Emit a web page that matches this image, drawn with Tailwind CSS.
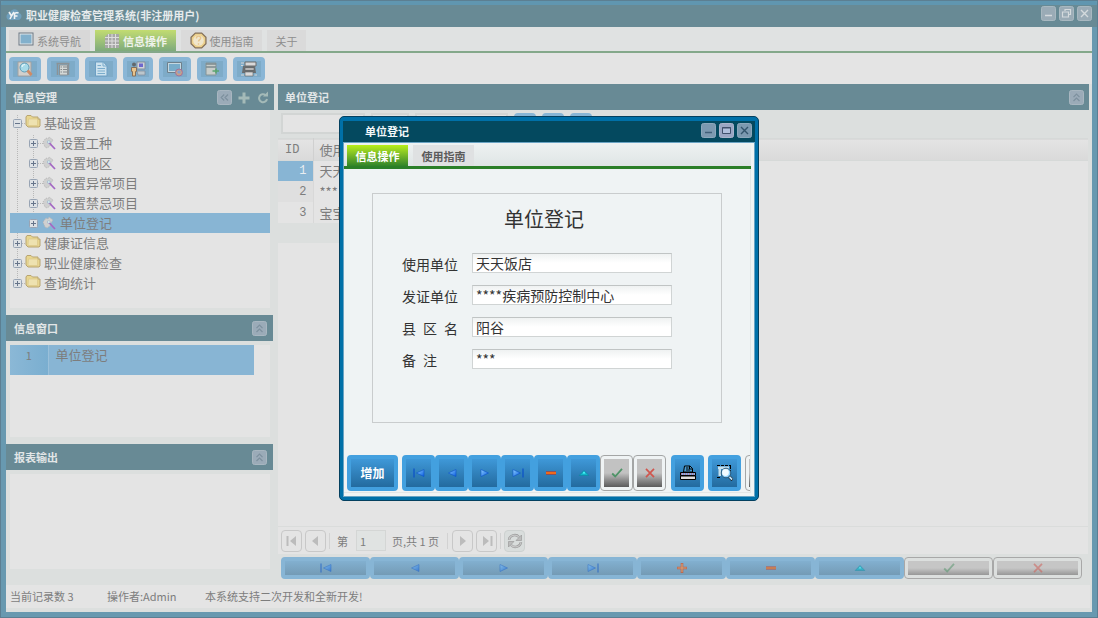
<!DOCTYPE html>
<html lang="zh-CN">
<head>
<meta charset="utf-8">
<title>职业健康检查管理系统</title>
<script src="https://cdn.jsdelivr.net/npm/@tailwindcss/browser@4"></script>
</head>
<body class="h-screen overflow-hidden font-['Noto_Sans_CJK_SC',sans-serif] text-[11px] leading-4 text-[#7d7d7d] bg-[#6899b0]">

<svg width="0" height="0" class="absolute" aria-hidden="true">
  <defs>
    <linearGradient id="blue" x1="0" y1="0" x2="1" y2="1"><stop offset="0" stop-color="#8cd0ff"/><stop offset="1" stop-color="#0a5ce0"/></linearGradient>
    <symbol id="first" viewBox="0 0 12 10"><path d="M1 .5v9" stroke="#0a50c8" stroke-width="1.2"/><path d="M11 1.5v7L3.500 5z" fill="url(#blue)" stroke="#0a50c8" stroke-width=".6"/></symbol>
    <symbol id="prev" viewBox="0 0 12 10"><path d="M10 1.500v7L2.500 5z" fill="url(#blue)" stroke="#0a50c8" stroke-width=".6"/></symbol>
    <symbol id="next" viewBox="0 0 12 10"><path d="M2 1.500v7L9.500 5z" fill="url(#blue)" stroke="#0a50c8" stroke-width=".6"/></symbol>
    <symbol id="last" viewBox="0 0 12 10"><path d="M11 .5v9" stroke="#0a50c8" stroke-width="1.2"/><path d="M1 1.500v7L8.500 5z" fill="url(#blue)" stroke="#0a50c8" stroke-width=".6"/></symbol>
    <symbol id="plus" viewBox="0 0 12 10"><path d="M6 0v10M1 5h10" stroke="#e04010" stroke-width="2.600"/><path d="M6 .8v8.400M1.500 5h9" stroke="#ffa050" stroke-width="1.2"/></symbol>
    <symbol id="minus" viewBox="0 0 12 10"><path d="M1 5h10" stroke="#dd2200" stroke-width="3"/><path d="M1 5h10" stroke="#ff9a2c" stroke-width="1.200"/></symbol>
    <symbol id="up" viewBox="0 0 12 10"><path d="M6 2.500L10.800 7.500H1.200z" fill="#12b4c8" stroke="#068098" stroke-width=".5"/><path d="M6 3.500l1.500 2h-3z" fill="#5ff"/></symbol>
    <symbol id="ok" viewBox="0 0 12 10"><path d="M1.200 5.500l3 3L11 .8" fill="none" stroke="#4f9468" stroke-width="1.800"/></symbol>
    <symbol id="no" viewBox="0 0 12 10"><path d="M2 .8l8 8.400M10 .8L2 9.200" stroke="#d0564e" stroke-width="1.700"/></symbol>
    <symbol id="folder" viewBox="0 0 16 14"><path d="M1 11V3l1-1.500h4L7.500 3H13v2h2v7l-1 1H3z" fill="#e8d690" stroke="#b8a470"/><path d="M3.500 5h9v6.500H3z" fill="#eee2b0" stroke="#d8c484" stroke-width=".6"/></symbol>
    <symbol id="wand" viewBox="0 0 14 14"><path d="M1 6l3-4 2 1 1-2 4 3-2 3-1 3-3 2-2-1z" fill="#d0d0d0" stroke="#b4b4b4" stroke-dasharray="1.500 1" stroke-width=".8"/><path d="M6.500 6L13 13" stroke="#a468c4" stroke-width="1.800"/><path d="M5.500 5h2.500v2H5.500z" fill="#eef6fa" stroke="#8fb6c8" stroke-width=".6"/></symbol>
    <symbol id="exp" viewBox="0 0 9 9"><rect x=".5" y=".5" width="8" height="8" rx="1" fill="#dde1e5" stroke="#98a4b4"/><path d="M2 4.500h5M4.500 2v5" stroke="#66748a"/></symbol>
    <symbol id="col" viewBox="0 0 9 9"><rect x=".5" y=".5" width="8" height="8" rx="1" fill="#dde1e5" stroke="#98a4b4"/><path d="M2 4.500h5" stroke="#66748a"/></symbol>
    <symbol id="chev" viewBox="0 0 15 15"><rect x=".5" y=".5" width="14" height="14" rx="2" fill="#9babb8" stroke="#a8b6c0"/><path d="M4.500 7.200l3-3 3 3M4.500 11l3-3 3 3" fill="none" stroke="#7d909e" stroke-width="1.200"/></symbol>
    <symbol id="wmin" viewBox="0 0 15 15"><rect x=".5" y=".5" width="14" height="14" rx="2" fill="#7c99b0" stroke="#8ca8bc"/><path d="M4 9.500h7" stroke="#405f78" stroke-width="1.500"/></symbol>
    <symbol id="wmax" viewBox="0 0 15 15"><rect x=".5" y=".5" width="14" height="14" rx="2" fill="#9aa6c4" stroke="#aab4cc"/><path d="M3.500 4.500h8v6h-8z" fill="#b0bfdc" stroke="#40506c"/><path d="M3 5h9" stroke="#40506c"/></symbol>
    <symbol id="wclose" viewBox="0 0 15 15"><rect x=".5" y=".5" width="14" height="14" rx="2" fill="#7c99b0" stroke="#8ca8bc"/><path d="M4 4l7 7M11 4l-7 7" stroke="#34546c" stroke-width="1.400"/></symbol>
    <symbol id="mmin" viewBox="0 0 15 15"><rect x=".5" y=".5" width="14" height="14" rx="2" fill="#9aabb6" stroke="#a8b8c0"/><path d="M4 9.500h7" stroke="#d4dadd" stroke-width="1.500"/></symbol>
    <symbol id="mrest" viewBox="0 0 15 15"><rect x=".5" y=".5" width="14" height="14" rx="2" fill="#9aabb6" stroke="#a8b8c0"/><path d="M6 5V3.500h5.500v5H10M3.500 6h6v5h-6z" fill="none" stroke="#d4dadd" stroke-width="1.200"/></symbol>
    <symbol id="mclose" viewBox="0 0 15 15"><rect x=".5" y=".5" width="14" height="14" rx="2" fill="#9aabb6" stroke="#a8b8c0"/><path d="M4 4l7 7M11 4l-7 7" stroke="#d4dadd" stroke-width="1.400"/></symbol>
  </defs>
</svg>

<div class="flex h-full flex-col border border-[#5c7f92]">
  <header class="flex h-[26px] shrink-0 items-center gap-1 rounded-t border-t-4 border-[#6096b0] bg-[#688a95] px-[5px] pb-0.5">
    <svg class="h-3.5 w-4" viewBox="0 0 16 14" aria-hidden="true"><path d="M3 12C-1 11 0 5 4 5c1-5 8-5 9 0 4 1 3 7-1 7z" fill="#6f9fbc"/><path d="M3 4l2.500 4L8 4M5.500 8l-1.500 3M8.500 11V6.500c0-2 3-2 4-1.500M8 8h3.500" fill="none" stroke="#eef2f4" stroke-width="1.600"/></svg>
    <h1 class="flex-1 font-bold text-[#e6ebec]">职业健康检查管理系统(非注册用户)</h1>
    <div class="flex gap-[3px] pb-1">
      <button aria-label="最小化"><svg class="size-[15px]"><use href="#mmin"/></svg></button>
      <button aria-label="还原"><svg class="size-[15px]"><use href="#mrest"/></svg></button>
      <button aria-label="关闭"><svg class="size-[15px]"><use href="#mclose"/></svg></button>
    </div>
  </header>

  <div class="mx-[5px] mb-[5px] flex min-h-0 flex-1 flex-col bg-[#dcdfde]">
    <nav class="flex h-[26px] shrink-0 items-end gap-[5px] border-b-2 border-[#84a88a] bg-[#e0e2e2] pl-[3px] text-[#8e8e8e]">
      <button class="flex h-[21px] w-[81px] items-center justify-center gap-[3px] bg-[#d8d8d8]">
        <svg class="mb-1 h-3.5 w-4" viewBox="0 0 16 14" aria-hidden="true"><rect x="1" y="1" width="14" height="12" fill="#e4e8ea" stroke="#6c7884"/><rect x="2.500" y="2.500" width="11" height="9" fill="#82b0cc"/></svg>系统导航</button>
      <button class="flex h-[21px] w-[81px] items-center justify-center gap-[3px] bg-linear-to-b from-[#c2dc70] to-[#7eaa7c] font-bold text-[#eef2ea]">
        <svg class="size-4" viewBox="0 0 16 16" aria-hidden="true"><path d="M4 1h11v14H1V4z" fill="#a8a8a8"/><path d="M1 4.500h14M1 8h14M1 11.500h14M4.500 1v14M8 1v14M11.500 1v14" stroke="#dedede"/></svg>信息操作</button>
      <button class="flex h-[21px] w-[81px] items-center justify-center gap-[3px] bg-[#dadada]">
        <svg class="size-[17px]" viewBox="0 0 16 16" aria-hidden="true"><path d="M5 1h6l4 4v6l-4 4H5l-4-4V5z" fill="#ecd08c" stroke="#84705a" stroke-width="1.200"/><circle cx="8" cy="8" r="5" fill="#f0e6cc"/><path d="M6 6c0-3 4.500-2.500 4 0-.3 1.200-2 1.400-2 3M8 10.500V12" fill="none" stroke="#e6c48c" stroke-width="1.300"/></svg>使用指南</button>
      <button class="h-[21px] w-[39px] bg-[#dadada]">关于</button>
    </nav>

    <div class="flex h-[31px] shrink-0 items-center gap-1.5 bg-[#e4e4e4] pl-[3px]" role="toolbar" aria-label="工具栏">
      <button aria-label="查询" class="flex h-6 w-8 items-center justify-center rounded-sm border-4 border-[#8ab6d6] bg-[#7eabc8]"><svg class="size-4 shrink-0" viewBox="0 0 16 16"><path d="M1 1h13v14H1z" fill="#d2d0cc" stroke="#a2a2a2"/><circle cx="7.500" cy="6.500" r="4.500" fill="#a6dae8" stroke="#5e9cb8"/><path d="M5 6a3 3 0 0 1 3-2.500" fill="none" stroke="#e6f6fa" stroke-width="1.200"/><path d="M10.500 9.500L14.500 14" stroke="#d08a64" stroke-width="2.800"/></svg></button>
      <button aria-label="列表" class="flex h-6 w-8 items-center justify-center rounded-sm border-4 border-[#8ab6d6] bg-[#7eabc8]"><svg class="size-4 shrink-0" viewBox="0 0 16 16"><path d="M1.500 2.500h13M2.500 2v12M13.500 2v12" stroke="#8a9296" stroke-width="1.500"/><path d="M4.500 4h8v10h-8z" fill="#d4d8d6" stroke="#8a9296"/><path d="M8 6h4M8 8.500h4M8 11h4M5.500 6h1.500M5.500 8.500H7M5.500 11H7" stroke="#858a8d"/></svg></button>
      <button aria-label="文档" class="flex h-6 w-8 items-center justify-center rounded-sm border-4 border-[#8ab6d6] bg-[#7eabc8]"><svg class="size-4 shrink-0" viewBox="0 0 16 16"><path d="M2.500 1h8l3.500 4v10H2.500z" fill="#cce2ee" stroke="#6c9fc4"/><path d="M10 1v4h4M4.500 4.500H8M4.500 7.500H12M4.500 10H12M4.500 12.500H12" fill="none" stroke="#7aaccc"/></svg></button>
      <button aria-label="用户" class="flex h-6 w-[30px] items-center justify-center rounded-sm border-4 border-[#8ab6d6] bg-[#7eabc8]"><svg class="size-4 shrink-0" viewBox="0 0 16 16"><path d="M7 1h8v7H7z" fill="#d0d4d8" stroke="#8490a0"/><path d="M9 2.500h4v3.500H9z" fill="#6e68cc"/><path d="M7 10h8v4H8z" fill="#bcc6cc" stroke="#8490a0" stroke-width=".8"/><circle cx="4" cy="3.500" r="2" fill="#62686d"/><path d="M1.500 6.500h5v4H5.500V15h-3v-4.500h-1z" fill="#e8c48c" stroke="#86705a"/></svg></button>
      <button aria-label="网络" class="flex h-6 w-8 items-center justify-center rounded-sm border-4 border-[#8ab6d6] bg-[#7eabc8]"><svg class="size-4 shrink-0" viewBox="0 0 16 16"><path d="M.5 1.500h14v10H.5z" fill="#c4d8e2" stroke="#6e808c"/><path d="M2 3h11v7H2z" fill="#78acca"/><circle cx="12" cy="11.500" r="3.500" fill="#c8a088" stroke="#9c74a0"/><path d="M10 11l2-2 2 2-2 2z" fill="#84a0d0"/></svg></button>
      <button aria-label="数据" class="flex h-6 w-[30px] items-center justify-center rounded-sm border-4 border-[#8ab6d6] bg-[#7eabc8]"><svg class="size-4 shrink-0" viewBox="0 0 16 16"><path d="M2 2h10v12H2z" fill="#c8cdca" stroke="#849498"/><path d="M2 3h10M2 6h10" stroke="#7c8a8e" stroke-width="1.500"/><path d="M8.500 10h6.500M12 7.500v5" stroke="#58a470" stroke-width="1.600"/></svg></button>
      <button aria-label="打印" class="flex h-6 w-8 items-center justify-center rounded-sm border-4 border-[#8ab6d6] bg-[#7eabc8]"><svg class="size-4 shrink-0" viewBox="0 0 16 16"><path d="M4 1h11v4H4z" fill="#d9d9d9" stroke="#6c6c6c"/><path d="M2 5h12l1 7H1z" fill="#6a6e70"/><path d="M4 7h9v2H4zM4 11h8v4H4z" fill="#d9d9d9" stroke="#666" stroke-width=".6"/><path d="M0 2h3M0 4.500h2M0 14h3M13.500 14H16" stroke="#d5d5d5"/></svg></button>
    </div>

    <div class="flex min-h-0 flex-1 gap-1">
      <aside class="flex w-[268px] shrink-0 flex-col">
        <section>
          <header class="flex h-[26px] items-center gap-1 bg-[#688a95] pr-1 pl-[7px]">
            <h2 class="flex-1 font-bold text-[#e2e6e7]">信息管理</h2>
            <button aria-label="收起"><svg class="size-[15px] -rotate-90"><use href="#chev"/></svg></button>
            <button aria-label="添加"><svg class="size-4" viewBox="0 0 16 16"><path d="M8 3.500v11M2.500 9h11" stroke="#a4bab8" stroke-width="3"/></svg></button>
            <button aria-label="刷新"><svg class="size-3.5" viewBox="0 0 14 14"><path d="M9.500 5A4 4 0 1 0 11 9" fill="none" stroke="#a4bab8" stroke-width="2"/><path d="M7 6.500h5V1.500z" fill="#a4bab8"/></svg></button>
          </header>
          <div class="relative isolate mx-1 bg-[#e4e4e4]">
            <svg class="absolute inset-0 -z-10 h-full w-full" aria-hidden="true"><path d="M7.500 5v165M23.500 25v85M12 13.500h5M28 33.500h5M28 53.500h5M28 73.500h5M28 93.500h5M12 133.500h5M12 153.500h5M12 173.500h5" stroke="#b8b8b8" stroke-dasharray="1 1" fill="none"/></svg>
            <ul class="flex h-[198px] flex-col pt-[3px] text-[13px] leading-5">
              <li class="flex h-5 items-center pl-[3px]"><svg class="size-[9px]"><use href="#col"/></svg><svg class="mx-[3px] mb-1 h-3.5 w-4"><use href="#folder"/></svg>基础设置</li>
              <li class="flex h-5 items-center pl-[19px]"><svg class="size-[9px]"><use href="#exp"/></svg><svg class="mx-1 size-3.5"><use href="#wand"/></svg>设置工种</li>
              <li class="flex h-5 items-center pl-[19px]"><svg class="size-[9px]"><use href="#exp"/></svg><svg class="mx-1 size-3.5"><use href="#wand"/></svg>设置地区</li>
              <li class="flex h-5 items-center pl-[19px]"><svg class="size-[9px]"><use href="#exp"/></svg><svg class="mx-1 size-3.5"><use href="#wand"/></svg>设置异常项目</li>
              <li class="flex h-5 items-center pl-[19px]"><svg class="size-[9px]"><use href="#exp"/></svg><svg class="mx-1 size-3.5"><use href="#wand"/></svg>设置禁忌项目</li>
              <li class="flex h-5 items-center bg-[#88b5d4] pl-[19px]"><svg class="size-[9px]"><use href="#exp"/></svg><svg class="mx-1 size-3.5"><use href="#wand"/></svg>单位登记</li>
              <li class="flex h-5 items-center pl-[3px]"><svg class="size-[9px]"><use href="#exp"/></svg><svg class="mx-[3px] mb-1 h-3.5 w-4"><use href="#folder"/></svg>健康证信息</li>
              <li class="flex h-5 items-center pl-[3px]"><svg class="size-[9px]"><use href="#exp"/></svg><svg class="mx-[3px] mb-1 h-3.5 w-4"><use href="#folder"/></svg>职业健康检查</li>
              <li class="flex h-5 items-center pl-[3px]"><svg class="size-[9px]"><use href="#exp"/></svg><svg class="mx-[3px] mb-1 h-3.5 w-4"><use href="#folder"/></svg>查询统计</li>
            </ul>
          </div>
        </section>
        <section class="mt-[7px]">
          <header class="mr-px flex h-[26px] items-center bg-[#688a95] pr-1.5 pl-2">
            <h2 class="flex-1 font-bold text-[#e2e6e7]">信息窗口</h2>
            <button aria-label="收起"><svg class="size-[15px]"><use href="#chev"/></svg></button>
          </header>
          <div class="mx-1 mt-1 h-[92px] bg-[#e4e4e4] pr-4">
            <table class="h-[30px] w-full bg-[#88b5d4]"><tbody><tr>
              <td class="w-[38px] border-r border-[#9ac0da] bg-linear-to-r from-[#8bb8d6] to-[#7aaed0] text-center align-top leading-5">1</td>
              <td class="pl-[7px] align-top text-[13px] leading-5">单位登记</td>
            </tr></tbody></table>
          </div>
        </section>
        <section class="mt-[7px] flex min-h-0 flex-1 flex-col">
          <header class="mr-px flex h-[26px] shrink-0 items-center bg-[#688a95] pr-1.5 pl-2">
            <h2 class="flex-1 font-bold text-[#e2e6e7]">报表输出</h2>
            <button aria-label="收起"><svg class="size-[15px]"><use href="#chev"/></svg></button>
          </header>
          <div class="mx-1 mt-1 mb-4 flex-1 bg-[#e4e4e4]"></div>
        </section>
      </aside>

      <main class="mr-[3px] flex min-w-0 flex-1 flex-col">
        <header class="flex h-[26px] shrink-0 items-center bg-[#688a95] pr-[5px] pl-[7px]">
          <h2 class="flex-1 font-bold text-[#e2e6e7]">单位登记</h2>
          <button aria-label="收起"><svg class="size-[15px]"><use href="#chev"/></svg></button>
        </header>
        <div class="flex h-7 shrink-0 items-start gap-1.5 pt-[3px] pl-[3px]">
          <input aria-label="查询条件" class="h-[21px] w-[84px] border-2 border-[#d2d5d4] bg-[#e4e4e4]">
          <input aria-label="比较方式" class="h-[21px] w-[38px] border-2 border-[#d2d5d4] bg-[#e4e4e4]">
          <input aria-label="查询内容" class="h-[21px] w-[93px] border-2 border-[#d2d5d4] bg-[#e4e4e4]">
          <button aria-label="搜索" class="h-6 w-[22px] rounded bg-[#87b5d5]"></button>
          <button aria-label="清除" class="h-6 w-[22px] rounded bg-[#87b5d5]"></button>
          <button aria-label="导出" class="h-6 w-[22px] rounded bg-[#87b5d5]"></button>
        </div>
        <div class="mr-px min-h-0 flex-1 bg-[#e4e4e4]">
          <table class="w-full text-[13px] leading-5">
            <thead><tr class="h-[22px] border-y border-[#d6d9d8] bg-linear-to-b from-[#e4e4e4] to-[#dadada] text-left">
              <th class="w-[35px] border-r border-[#d0d0d0] pl-[7px] font-['Liberation_Mono',monospace] text-xs font-normal">ID</th><th class="pl-1.5 font-normal">使用</th></tr></thead>
            <tbody>
              <tr class="h-5"><td class="border-r border-[#d8d8d8] bg-[#88b5d4] pr-1.5 text-right font-['Liberation_Mono',monospace] text-xs text-[#e8eef2]">1</td><td class="pl-1.5">天天</td></tr>
              <tr class="h-[21px]"><td class="border-r border-[#d8d8d8] bg-[#dfdfdf] pr-1.5 text-right font-['Liberation_Mono',monospace] text-xs">2</td><td class="pl-1.5">***</td></tr>
              <tr class="h-[21px]"><td class="border-r border-[#d8d8d8] pr-1.5 text-right font-['Liberation_Mono',monospace] text-xs">3</td><td class="pl-1.5">宝宝</td></tr>
            </tbody>
          </table>
          <div class="h-5 w-[200px] bg-[#dcdfde]"></div>
        </div>
        <div class="mr-px flex h-7 shrink-0 items-center border-t border-[#dadcdb] bg-[#e4e4e4] pl-[3px]">
          <button aria-label="首页" class="mr-[3px] flex h-[22px] w-[21px] items-center justify-center rounded-sm border border-[#c8c8c8]"><svg class="size-3.5" viewBox="0 0 14 14"><path d="M2.500 2v10" stroke="#bcbcbc" stroke-width="2"/><path d="M11 2v10L5 7z" fill="#bcbcbc"/></svg></button>
          <button aria-label="上一页" class="flex h-[22px] w-[21px] items-center justify-center rounded-sm border border-[#c8c8c8]"><svg class="size-3.5" viewBox="0 0 14 14"><path d="M9 2v10L3 7z" fill="#bcbcbc"/></svg></button>
          <span class="mr-[7px] ml-[3px] h-4 border-l border-[#d2d2d2]"></span>
          <label for="page" class="mr-2">第</label>
          <input id="page" value="1" class="mr-1.5 h-[21px] w-[30px] border border-[#d4d6d5] bg-[#e0e3e2] pl-[3px]">
          <span>页,共 1 页</span>
          <span class="mr-1 ml-2 h-4 border-l border-[#d2d2d2]"></span>
          <button aria-label="下一页" class="mr-[3px] flex h-[22px] w-[21px] items-center justify-center rounded-sm border border-[#c8c8c8]"><svg class="size-3.5" viewBox="0 0 14 14"><path d="M4 2v10l6-5z" fill="#bcbcbc"/></svg></button>
          <button aria-label="末页" class="flex h-[22px] w-[21px] items-center justify-center rounded-sm border border-[#c8c8c8]"><svg class="size-3.5" viewBox="0 0 14 14"><path d="M11.500 2v10" stroke="#bcbcbc" stroke-width="2"/><path d="M3 2v10l6-5z" fill="#bcbcbc"/></svg></button>
          <span class="mx-[3px] h-4 border-l border-[#d2d2d2]"></span>
          <button aria-label="刷新" class="flex h-[22px] w-[21px] items-center justify-center rounded-sm border border-[#cdd1d0] bg-[#d9dddc]"><svg class="size-4" viewBox="0 0 16 16"><path d="M2 7C2.500 2 9 .5 12 4M14 9C13.500 14 7 15.500 4 12" fill="none" stroke="#989898" stroke-width="2.400"/><path d="M2 7C2.500 2 9 .5 12 4M14 9C13.500 14 7 15.500 4 12" fill="none" stroke="#c8c8c8" stroke-width="1.200"/><path d="M14.500 2v5.500H9zM1.500 14V8.500H7z" fill="#bcbcbc" stroke="#949494" stroke-width=".6"/></svg></button>
        </div>
        <div class="mt-[3px] mr-[7px] mb-1.5 ml-[3px] grid h-[22px] shrink-0 grid-cols-9">
          <button aria-label="首条" class="flex items-center justify-center rounded-sm border-4 border-[#87b5d5] bg-linear-to-b from-[#82b0d0] to-[#749bb5]"><svg class="h-2.5 w-3 opacity-55"><use href="#first"/></svg></button>
          <button aria-label="上一条" class="flex items-center justify-center rounded-sm border-4 border-[#87b5d5] bg-linear-to-b from-[#82b0d0] to-[#749bb5]"><svg class="h-2.5 w-3 opacity-55"><use href="#prev"/></svg></button>
          <button aria-label="下一条" class="flex items-center justify-center rounded-sm border-4 border-[#87b5d5] bg-linear-to-b from-[#82b0d0] to-[#749bb5]"><svg class="h-2.5 w-3 opacity-55"><use href="#next"/></svg></button>
          <button aria-label="末条" class="flex items-center justify-center rounded-sm border-4 border-[#87b5d5] bg-linear-to-b from-[#82b0d0] to-[#749bb5]"><svg class="h-2.5 w-3 opacity-55"><use href="#last"/></svg></button>
          <button aria-label="新增" class="flex items-center justify-center rounded-sm border-4 border-[#87b5d5] bg-linear-to-b from-[#82b0d0] to-[#749bb5]"><svg class="h-2.5 w-3 opacity-65"><use href="#plus"/></svg></button>
          <button aria-label="删除" class="flex items-center justify-center rounded-sm border-4 border-[#87b5d5] bg-linear-to-b from-[#82b0d0] to-[#749bb5]"><svg class="h-2.5 w-3 opacity-65"><use href="#minus"/></svg></button>
          <button aria-label="编辑" class="flex items-center justify-center rounded-sm border-4 border-[#87b5d5] bg-linear-to-b from-[#82b0d0] to-[#749bb5]"><svg class="h-2.5 w-3 opacity-65"><use href="#up"/></svg></button>
          <button aria-label="保存" class="flex rounded-sm border border-[#a8a8a8] p-[3px]"><span class="flex h-full w-full items-center justify-center bg-linear-to-b from-[#c6c6c6] from-50% to-[#979797]"><svg class="h-2.5 w-3 opacity-50"><use href="#ok"/></svg></span></button>
          <button aria-label="取消" class="flex rounded-sm border border-[#a8a8a8] p-[3px]"><span class="flex h-full w-full items-center justify-center bg-linear-to-b from-[#c6c6c6] from-50% to-[#979797]"><svg class="h-2.5 w-3 opacity-50"><use href="#no"/></svg></span></button>
        </div>
      </main>
    </div>

    <footer class="mr-0.5 mb-1 flex h-[23px] shrink-0 items-center bg-[#e4e4e4] pb-0.5 pl-1">
      <span class="w-[97px]">当前记录数 3</span><span class="w-[98px]">操作者:Admin</span><span>本系统支持二次开发和全新开发!</span>
    </footer>
  </div>
</div>

<div class="fixed inset-0 flex items-center justify-center pb-px">
  <div role="dialog" aria-labelledby="dlg" class="flex w-[420px] flex-col rounded-[5px] border border-[#04405f] bg-[#0070a8] px-[3px] pt-1 pb-[3px]">
    <header class="flex h-[21px] items-center gap-[3px] bg-[#04495f] pr-[3px] pb-0.5 pl-[22px]">
      <h2 id="dlg" class="flex-1 font-bold text-[#f4f8fa]">单位登记</h2>
      <button aria-label="最小化"><svg class="size-[15px]"><use href="#wmin"/></svg></button>
      <button aria-label="最大化"><svg class="size-[15px]"><use href="#wmax"/></svg></button>
      <button aria-label="关闭"><svg class="size-[15px]"><use href="#wclose"/></svg></button>
    </header>
    <div class="border border-[#6aa4c4] bg-[#f0f4f4] pr-[3px]">
      <nav class="flex h-[26px] items-end gap-[5px] border-b-[3px] border-[#2b7f28] bg-linear-to-b from-[#eef2f2] to-[#dfe5e5] pl-[3px] font-bold">
        <button class="h-[21px] w-[61px] bg-linear-to-b from-[#b8ee18] to-[#2f8428] text-white">信息操作</button>
        <button class="h-[21px] w-[61px] bg-[#dfe1e2] text-[#5c5c5c]">使用指南</button>
      </nav>
      <form class="overflow-hidden border-r border-b border-[#e2e6e6] bg-[#eff3f4] pb-px text-[#333]">
        <fieldset class="mt-6 ml-7 flex h-[230px] w-[350px] flex-col border border-[#c9cccd] px-[29px] pt-[9px]">
          <h3 class="mb-[18px] pr-1.5 text-center text-xl leading-8">单位登记</h3>
          <div class="grid grid-cols-[70px_200px] gap-y-3 text-sm leading-5">
            <label for="f1" class="h-5 pt-px">使用单位</label><input id="f1" value="天天饭店" class="h-5 border border-[#d0d4d4] border-t-[#c0c4c4] bg-linear-to-b from-[#eff2f2] to-white to-50% pl-[3px]">
            <label for="f2" class="h-5 pt-px">发证单位</label><input id="f2" value="****疾病预防控制中心" class="h-5 border border-[#d0d4d4] border-t-[#c0c4c4] bg-linear-to-b from-[#eff2f2] to-white to-50% pl-[3px]">
            <label for="f3" class="flex h-5 w-14 justify-between pt-px"><span>县</span><span>区</span><span>名</span></label><input id="f3" value="阳谷" class="h-5 border border-[#d0d4d4] border-t-[#c0c4c4] bg-linear-to-b from-[#eff2f2] to-white to-50% pl-[3px]">
            <label for="f4" class="flex h-5 gap-[7px] pt-px"><span>备</span><span>注</span></label><input id="f4" value="***" class="h-5 border border-[#d0d4d4] border-t-[#c0c4c4] bg-linear-to-b from-[#eff2f2] to-white to-50% pl-[3px]">
          </div>
        </fieldset>
        <div class="mt-8 ml-[3px] flex h-9">
          <button type="button" class="mr-1 w-[51px] shrink-0 rounded-sm border-4 border-[#43a0df] bg-linear-to-b from-[#3f98d8] to-[#236b9f] text-xs font-bold text-white">增加</button>
          <button type="button" aria-label="首条" class="flex w-[33px] shrink-0 items-center justify-center rounded-sm border-4 border-[#43a0df] bg-linear-to-b from-[#3f98d8] to-[#236b9f]"><svg class="h-2.5 w-3"><use href="#first"/></svg></button>
          <button type="button" aria-label="上一条" class="flex w-[33px] shrink-0 items-center justify-center rounded-sm border-4 border-[#43a0df] bg-linear-to-b from-[#3f98d8] to-[#236b9f]"><svg class="h-2.5 w-3"><use href="#prev"/></svg></button>
          <button type="button" aria-label="下一条" class="flex w-[33px] shrink-0 items-center justify-center rounded-sm border-4 border-[#43a0df] bg-linear-to-b from-[#3f98d8] to-[#236b9f]"><svg class="h-2.5 w-3"><use href="#next"/></svg></button>
          <button type="button" aria-label="末条" class="flex w-[33px] shrink-0 items-center justify-center rounded-sm border-4 border-[#43a0df] bg-linear-to-b from-[#3f98d8] to-[#236b9f]"><svg class="h-2.5 w-3"><use href="#last"/></svg></button>
          <button type="button" aria-label="删除" class="flex w-[33px] shrink-0 items-center justify-center rounded-sm border-4 border-[#43a0df] bg-linear-to-b from-[#3f98d8] to-[#236b9f]"><svg class="h-2.5 w-3"><use href="#minus"/></svg></button>
          <button type="button" aria-label="编辑" class="flex w-[33px] shrink-0 items-center justify-center rounded-sm border-4 border-[#43a0df] bg-linear-to-b from-[#3f98d8] to-[#236b9f]"><svg class="h-2.5 w-3"><use href="#up"/></svg></button>
          <button type="button" aria-label="保存" class="w-[33px] shrink-0 rounded-sm border border-[#a4a6a6] p-[3px]"><span class="flex h-full items-center justify-center bg-linear-to-b from-[#c2c2c2] from-50% to-[#5c5c5c]"><svg class="h-2.5 w-3"><use href="#ok"/></svg></span></button>
          <button type="button" aria-label="取消" class="mr-[5px] w-[33px] shrink-0 rounded-sm border border-[#a4a6a6] p-[3px]"><span class="flex h-full items-center justify-center bg-linear-to-b from-[#c2c2c2] from-50% to-[#5c5c5c]"><svg class="h-2.5 w-3"><use href="#no"/></svg></span></button>
          <button type="button" aria-label="打印" class="mr-1 flex w-[33px] shrink-0 items-center justify-center rounded-sm border-4 border-[#43a0df] bg-linear-to-b from-[#3f98d8] to-[#236b9f]"><svg class="size-4" viewBox="0 0 16 16"><path d="M3.500 7l1-6H10l2.500 2.500V7z" fill="#4c9cd0" stroke="#000"/><path d="M6 3h2.500M6 5h4M9.500 1v3h3" fill="none" stroke="#000"/><path d="M.5 7.500h15v3H.5z" fill="#7db0ee" stroke="#000"/><path d="M1 9h14" stroke="#e05050" stroke-dasharray="1 1"/><path d="M.5 11h15v3.500H.5z" fill="#ddd" stroke="#000"/></svg></button>
          <button type="button" aria-label="预览" class="mr-1 flex w-[33px] shrink-0 items-center justify-center rounded-sm border-4 border-[#43a0df] bg-linear-to-b from-[#3f98d8] to-[#236b9f]"><svg class="size-4" viewBox="0 0 16 16"><path d="M0 .5h14M0 12.500h4M13.500 1v5" fill="none" stroke="#000" stroke-dasharray="3 1"/><path d="M1 1.500h11v2.500H1zM1.500 4h2.500v7H1.500z" fill="#c6dfec"/><circle cx="9" cy="8" r="4.800" fill="#8fd0fa" stroke="#1c4460" stroke-width=".8"/><circle cx="8.500" cy="7.500" r="3.400" fill="#f2fbff"/><path d="M12.500 12l3 3" stroke="#111" stroke-width="3"/><path d="M12.500 12l2.700 2.700" stroke="#bfe6ff" stroke-width="1.800"/></svg></button>
          <button type="button" aria-label="更多" class="w-[33px] shrink-0 rounded-sm border border-[#a4a6a6] p-[3px]"><span class="block h-full bg-linear-to-b from-[#c2c2c2] from-50% to-[#5c5c5c]"></span></button>
        </div>
      </form>
      <div class="h-[3px]"></div>
    </div>
  </div>
</div>
</body>
</html>
